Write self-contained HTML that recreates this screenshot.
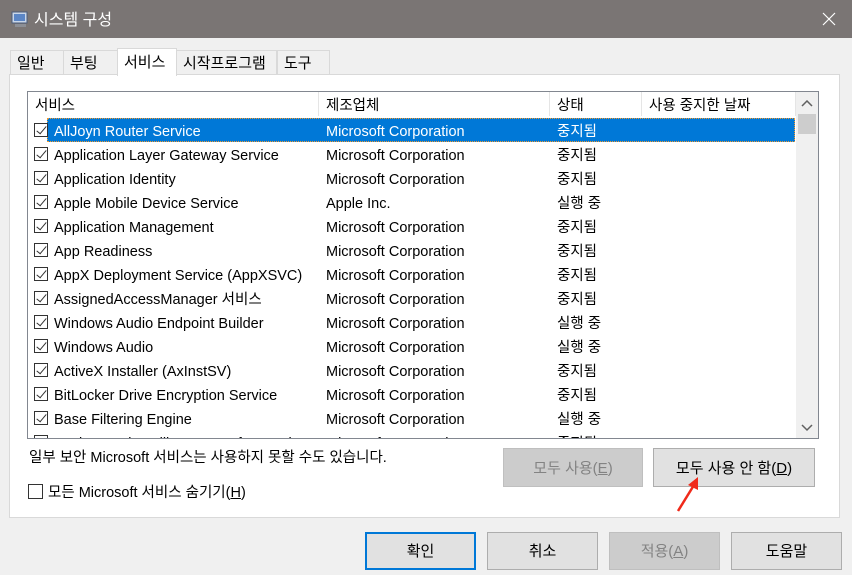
<!DOCTYPE html><html><head><meta charset="utf-8"><style>
*{margin:0;padding:0;box-sizing:border-box}
body{width:852px;height:575px;background:#f0f0f0;font-family:"Liberation Sans","Noto Sans CJK KR",sans-serif;font-size:14.5px;line-height:20px;color:#000;position:relative;overflow:hidden}
.a{position:absolute;white-space:nowrap}
#title{left:0;top:0;width:852px;height:38px;background:#7a7574;color:#fff;font-size:16px}
.tab{position:absolute;top:50px;height:25px;border:1px solid #d9d9d9;border-bottom:none;background:#f0f0f0;padding:0 0 0 6px;font-size:15px;line-height:25px}
#panel{left:9px;top:74px;width:831px;height:444px;background:#fff;border:1px solid #d9d9d9}
#list{left:27px;top:91px;width:792px;height:348px;border:1px solid #828790;background:#fff;overflow:hidden}
.row{position:absolute;left:0;height:24px;width:768px}
.row span{position:absolute;top:2px;line-height:24px}
.cb{position:absolute;left:6px;top:5px;width:14px;height:14px;border:1px solid #333;background:#fff}
.cb:after{content:"";position:absolute;left:4px;top:0px;width:4px;height:9px;border:solid #333;border-width:0 1.5px 1.5px 0;transform:rotate(40deg)}
.btn{position:absolute;border:1px solid #adadad;background:#e1e1e1;text-align:center;font-size:15px}
.dis{background:#cccccc;border-color:#bfbfbf;color:#838383}
.hd{position:absolute;top:0;height:24px;border-right:1px solid #e5e5e5;padding:2px 0 0 7px;line-height:24px}
</style></head><body>
<div id="title" class="a">
<svg class="a" style="left:11px;top:10px" width="18" height="18"><rect x="1" y="2" width="15" height="11" fill="#c9d6e8" stroke="#4b5c7a"/><rect x="3" y="4" width="11" height="7" fill="#5b86c6"/><rect x="4" y="14" width="11" height="3" fill="#8c8f96"/></svg>
<span class="a" style="left:34px;top:2px;line-height:38px">시스템 구성</span>
<svg class="a" style="left:822px;top:12px" width="14" height="14"><path d="M1 1L13 13M13 1L1 13" stroke="#fff" stroke-width="1.2"/></svg>
</div>
<div class="tab" style="left:10px;width:54px">일반</div>
<div class="tab" style="left:63px;width:55px">부팅</div>
<div class="tab" style="left:176px;width:101px">시작프로그램</div>
<div class="tab" style="left:277px;width:53px">도구</div>
<div id="panel" class="a"></div>
<div class="tab" style="left:117px;top:48px;width:60px;height:28px;background:#fff;z-index:2;border-color:#d9d9d9;line-height:27px">서비스</div>
<div id="list" class="a">
<div class="hd" style="left:0;width:291px">서비스</div>
<div class="hd" style="left:291px;width:231px">제조업체</div>
<div class="hd" style="left:522px;width:92px">상태</div>
<div class="hd" style="left:614px;width:154px">사용 중지한 날짜</div>
<div class="a" style="left:768px;top:0;width:22px;height:346px;background:#f0f0f0"></div>
<div class="a" style="left:770px;top:22px;width:18px;height:20px;background:#cdcdcd"></div>
<svg class="a" style="left:773px;top:8px" width="12" height="8"><path d="M1 6L6 1L11 6" stroke="#606060" fill="none" stroke-width="1.5"/></svg>
<svg class="a" style="left:773px;top:332px" width="12" height="8"><path d="M1 1L6 6L11 1" stroke="#606060" fill="none" stroke-width="1.5"/></svg>
<div class="a" style="left:19px;top:26px;width:748px;height:24px;background:#0078d7;outline:1px dotted #f29a2e;outline-offset:-1px"></div>
ROWS
</div>
<span class="a" style="left:29px;top:448px">일부 보안 Microsoft 서비스는 사용하지 못할 수도 있습니다.</span>
<div class="a" style="left:28px;top:484px;width:15px;height:15px;border:1px solid #333;background:#fff"></div>
<span class="a" style="left:48px;top:483px">모든 Microsoft 서비스 숨기기(<u>H</u>)</span>
<div class="btn dis" style="left:503px;top:448px;width:140px;height:39px;line-height:39px">모두 사용(<u>E</u>)</div>
<div class="btn" style="left:653px;top:448px;width:162px;height:39px;line-height:39px">모두 사용 안 함(<u>D</u>)</div>
<svg class="a" style="left:674px;top:475px" width="30" height="40"><path d="M4 36 L20 10" stroke="#f02a1a" stroke-width="2.5"/><path d="M24 2 L14 10 L24 15Z" fill="#f02a1a"/></svg>
<div class="btn" style="left:365px;top:532px;width:111px;height:38px;line-height:36px;border:2px solid #0078d7">확인</div>
<div class="btn" style="left:487px;top:532px;width:111px;height:38px;line-height:38px">취소</div>
<div class="btn dis" style="left:609px;top:532px;width:111px;height:38px;line-height:38px">적용(<u>A</u>)</div>
<div class="btn" style="left:731px;top:532px;width:111px;height:38px;line-height:38px">도움말</div>
<script>
var d=[["AllJoyn Router Service","Microsoft Corporation","중지됨"],["Application Layer Gateway Service","Microsoft Corporation","중지됨"],["Application Identity","Microsoft Corporation","중지됨"],["Apple Mobile Device Service","Apple Inc.","실행 중"],["Application Management","Microsoft Corporation","중지됨"],["App Readiness","Microsoft Corporation","중지됨"],["AppX Deployment Service (AppXSVC)","Microsoft Corporation","중지됨"],["AssignedAccessManager 서비스","Microsoft Corporation","중지됨"],["Windows Audio Endpoint Builder","Microsoft Corporation","실행 중"],["Windows Audio","Microsoft Corporation","실행 중"],["ActiveX Installer (AxInstSV)","Microsoft Corporation","중지됨"],["BitLocker Drive Encryption Service","Microsoft Corporation","중지됨"],["Base Filtering Engine","Microsoft Corporation","실행 중"],["Background Intelligent Transfer Service","Microsoft Corporation","중지됨"]];
var h="";d.forEach(function(r,i){var c=i==0?"color:#fff":"";h+='<div class="row" style="top:'+(26+i*24)+'px"><div class="cb"></div><span style="left:26px;'+c+'">'+r[0]+'</span><span style="left:298px;'+c+'">'+r[1]+'</span><span style="left:529px;'+c+'">'+r[2]+'</span></div>';});
var l=document.getElementById("list");l.innerHTML=l.innerHTML.replace("ROWS",h);
</script>
</body></html>
